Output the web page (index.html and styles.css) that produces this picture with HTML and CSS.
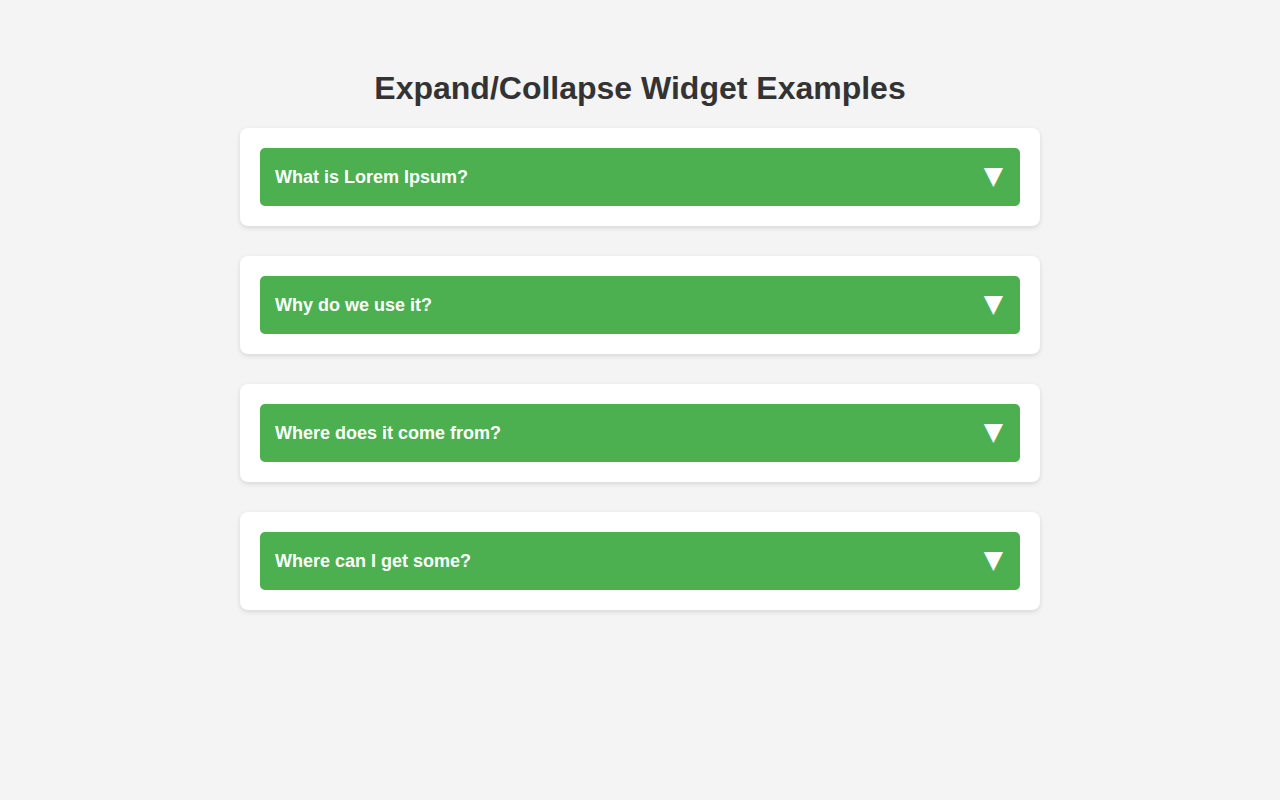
FILE: index.html
```html
<!DOCTYPE html>
<html lang="en">
<head>
<meta charset="utf-8">
<title>Expand/Collapse Widget Examples</title>
<link rel="stylesheet" href="styles.css">
</head>
<body>
<div class="container">
  <h1 class="title">Expand/Collapse Widget Examples</h1>
  <div class="card">
    <button class="toggle"><span class="label">What is Lorem Ipsum?</span><span class="arrow">▼</span></button>
  </div>
  <div class="card">
    <button class="toggle"><span class="label">Why do we use it?</span><span class="arrow">▼</span></button>
  </div>
  <div class="card">
    <button class="toggle"><span class="label">Where does it come from?</span><span class="arrow">▼</span></button>
  </div>
  <div class="card">
    <button class="toggle"><span class="label">Where can I get some?</span><span class="arrow">▼</span></button>
  </div>
</div>
</body>
</html>
```
FILE: styles.css
```css
html, body {
  margin: 0;
  padding: 0;
  background: #f4f4f4;
  font-family: "Liberation Sans", Arial, sans-serif;
  color: #333;
}
.container {
  width: 800px;
  margin: 0 auto;
  padding-top: 70px;
}
.title {
  margin: 0 0 21px;
  font-size: 32px;
  line-height: 37px;
  font-weight: bold;
  text-align: center;
  color: #333;
}
.card {
  background: #fff;
  border-radius: 8px;
  box-shadow: 0 2px 5px rgba(0, 0, 0, 0.12);
  padding: 20px;
  margin-bottom: 30px;
}
.toggle {
  display: flex;
  align-items: center;
  justify-content: space-between;
  width: 100%;
  height: 58px;
  padding: 0 15px;
  border: none;
  border-radius: 5px;
  background: #4caf50;
  color: #fff;
  font-family: "Liberation Sans", Arial, sans-serif;
  font-size: 18px;
  font-weight: bold;
  text-align: left;
  cursor: pointer;
}
.label {
  margin-top: 0;
}
.arrow {
  font-family: "DejaVu Sans", sans-serif;
  font-size: 25px;
  line-height: 1;
  font-weight: normal;
  margin-right: 2px;
  margin-bottom: 4px;
}
```
